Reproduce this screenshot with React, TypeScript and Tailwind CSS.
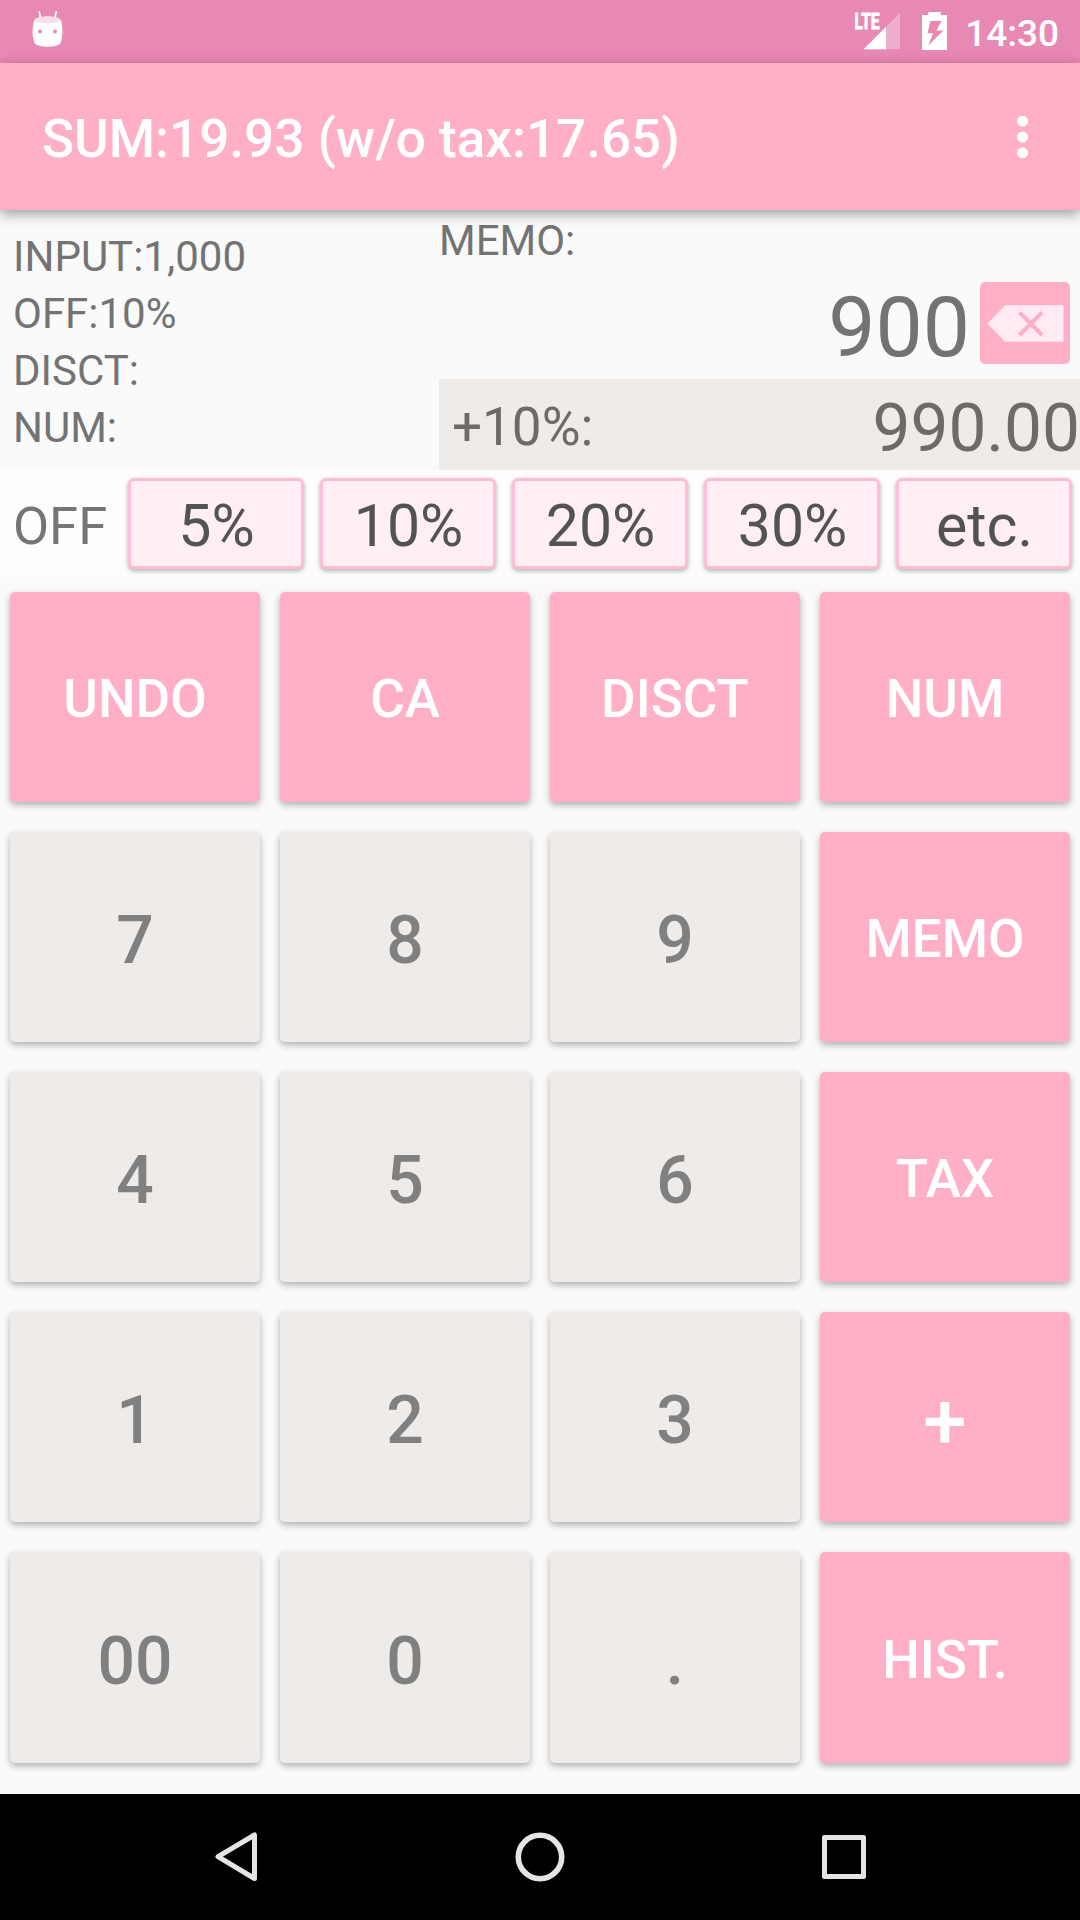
import React from "react";

const discounts = ["5%", "10%", "20%", "30%", "etc."];

type Key = { label: string; kind: "action" | "digit" | "plus" };

const action = (label: string): Key => ({ label, kind: "action" });
const digit = (label: string): Key => ({ label, kind: "digit" });

const keys: Key[] = [
  action("UNDO"), action("CA"), action("DISCT"), action("NUM"),
  digit("7"), digit("8"), digit("9"), action("MEMO"),
  digit("4"), digit("5"), digit("6"), action("TAX"),
  digit("1"), digit("2"), digit("3"), { label: "+", kind: "plus" },
  digit("00"), digit("0"), digit("."), action("HIST."),
];

const keyStyles = {
  action: "bg-[#ffafc6] text-white text-[53px] pt-[6px]",
  digit: "bg-[#efebe8] text-[#808080] text-[66px] pt-[7px]",
  plus: "bg-[#ffafc6] text-white text-[78px] pt-[8px]",
};

function StatusBar() {
  return (
    <div className="flex h-[63px] shrink-0 items-start justify-between bg-[#e889b3] pl-[31px] pr-[21px]">
      <svg className="mt-[10px] h-[38px] w-[33px]" viewBox="0 0 33 38">
        <path d="M8.3 1.8 9.6 8M25.2 1.8 23.9 8" stroke="#fff" strokeWidth="1.7" strokeLinecap="round" />
        <path d="M3.2 10.5C8 5 25 5 30 10.5 32 18 32 26 29.5 33 27 38 6 38 3.6 33 1 26 1 18 3.2 10.5Z" fill="#fff" />
        <ellipse cx="16.5" cy="9.8" rx="12.8" ry="3.4" fill="#f9dde8" />
        <circle cx="9" cy="21.5" r="2" fill="#e889b3" />
        <circle cx="24" cy="21.5" r="2" fill="#e889b3" />
      </svg>
      <div className="flex items-start">
        <svg className="mt-[4px] h-[50px] w-[56px]" viewBox="-10 -8 56 50">
          <path d="M45 1V37.3H8.7Z" fill="#fff" fillOpacity=".32" />
          <path d="M31 15V37.3H8.7Z" fill="#fff" />
          <text x="-.5" y="17" fontSize="22.5" fontWeight="700" textLength="25" lengthAdjust="spacingAndGlyphs" fill="#fff" stroke="#fff" strokeWidth=".9">LTE</text>
        </svg>
        <svg className="ml-[21px] mt-[12px] h-[38px] w-[25px]" viewBox="0 0 25 38">
          <path
            fillRule="evenodd"
            d="M6.3 0H18.7V3H25V38H0V3H6.3ZM8.5 9 5.5 21.2H11L6.3 33.5 21.5 18.5H14.5L19.5 9Z"
            fill="#fff"
          />
        </svg>
        <span className="ml-[18px] mt-[11px] text-[37px] leading-[46px] font-medium text-white">14:30</span>
      </div>
    </div>
  );
}

function Toolbar() {
  return (
    <header className="z-10 flex h-[147px] shrink-0 items-center justify-between bg-[#ffafc6] pl-[42px] pr-[51px] shadow-[0_4px_12px_rgba(0,0,0,0.38)]">
      <h1 className="pt-[6px] text-[53px] font-medium text-white">SUM:19.93 (w/o tax:17.65)</h1>
      <svg className="h-[44px] w-[13px]" viewBox="0 0 13 44" fill="#fff">
        <circle cx="6.5" cy="6.2" r="5.5" />
        <circle cx="6.5" cy="22" r="5.5" />
        <circle cx="6.5" cy="37.8" r="5.5" />
      </svg>
    </header>
  );
}

function Display() {
  return (
    <section className="flex h-[260px] shrink-0 bg-[#fafafa] text-[#737373]">
      <div className="w-[439px] pl-[13px] pt-[18px] text-[42px] leading-[57px]">
        <div>INPUT:1,000</div>
        <div>OFF:10%</div>
        <div>DISCT:</div>
        <div>NUM:</div>
      </div>
      <div className="flex flex-1 flex-col">
        <div className="pt-[2px] text-[42px] leading-[57px]">MEMO:</div>
        <div className="flex h-[110px] items-start justify-end pr-[10px]">
          <span className="pr-[10px] text-[84px] leading-[118px]">900</span>
          <button className="mt-[13px] h-[82px] w-[90px] rounded-[5px] bg-[#ffafc6]">
            <svg className="h-[82px] w-[90px]" viewBox="0 0 90 82">
              <path d="M7.6 41.5 25 23.3H83.5V59.7H25Z" fill="#ffebf1" />
              <path d="M39.5 30.3 62 53M62 30.3 39.5 53" stroke="#ffafc6" strokeWidth="4" />
            </svg>
          </button>
        </div>
        <div className="flex h-[91px] items-center justify-between bg-[#efebe8] pl-[13px] text-[#6c6b69]">
          <span className="pt-[6px] text-[53px]">+10%:</span>
          <span className="pt-[7px] text-[67.5px]">990.00</span>
        </div>
      </div>
    </section>
  );
}

function DiscountRow() {
  return (
    <section className="flex h-[107px] shrink-0 items-start bg-[#fdfdfd] pl-[13px] pt-[8px]">
      <span className="w-[115px] text-[52.5px] leading-[97px] text-[#757575]">OFF</span>
      <div className="flex gap-[16px]">
        {discounts.map((d) => (
          <button
            key={d}
            className="h-[91px] w-[176px] rounded-[6px] border-3 border-[#ffbbd8] bg-[#ffeff3] pl-[1px] pt-[4px] text-[59px] leading-[81px] text-[#535353] shadow-[0_2px_5px_rgba(0,0,0,0.3)]"
          >
            {d}
          </button>
        ))}
      </div>
    </section>
  );
}

function Keypad() {
  return (
    <section className="grid flex-1 grid-cols-4 grid-rows-[repeat(4,210px)_211px] content-start gap-x-[20px] gap-y-[30px] px-[10px] pt-[15px]">
      {keys.map((k) => (
        <button
          key={k.label}
          className={`rounded-[5px] font-medium shadow-[0_3px_7px_rgba(0,0,0,0.3)] ${keyStyles[k.kind]}`}
        >
          {k.label}
        </button>
      ))}
    </section>
  );
}

function NavBar() {
  return (
    <nav className="flex h-[126px] shrink-0 items-center justify-between bg-black pl-[212px] pr-[213px]">
      <svg className="h-[52px] w-[46px]" viewBox="0 0 46 52" fill="none" stroke="#e5e5e5" strokeWidth="5" strokeLinejoin="round">
        <path d="M42.5 4V47.5L6 25.7Z" />
      </svg>
      <svg className="h-[52px] w-[52px]" viewBox="0 0 52 52" fill="none" stroke="#e5e5e5" strokeWidth="5.6">
        <circle cx="26" cy="26" r="21.7" />
      </svg>
      <svg className="h-[52px] w-[46px]" viewBox="0 0 46 52" fill="none" stroke="#e5e5e5" strokeWidth="5" strokeLinejoin="round">
        <rect x="3.5" y="6.5" width="39" height="39" />
      </svg>
    </nav>
  );
}

export default function App() {
  return (
    <div className="flex h-[1920px] w-[1080px] flex-col overflow-hidden bg-[#fafafa] font-[Roboto,sans-serif]">
      <StatusBar />
      <Toolbar />
      <Display />
      <DiscountRow />
      <Keypad />
      <NavBar />
    </div>
  );
}
